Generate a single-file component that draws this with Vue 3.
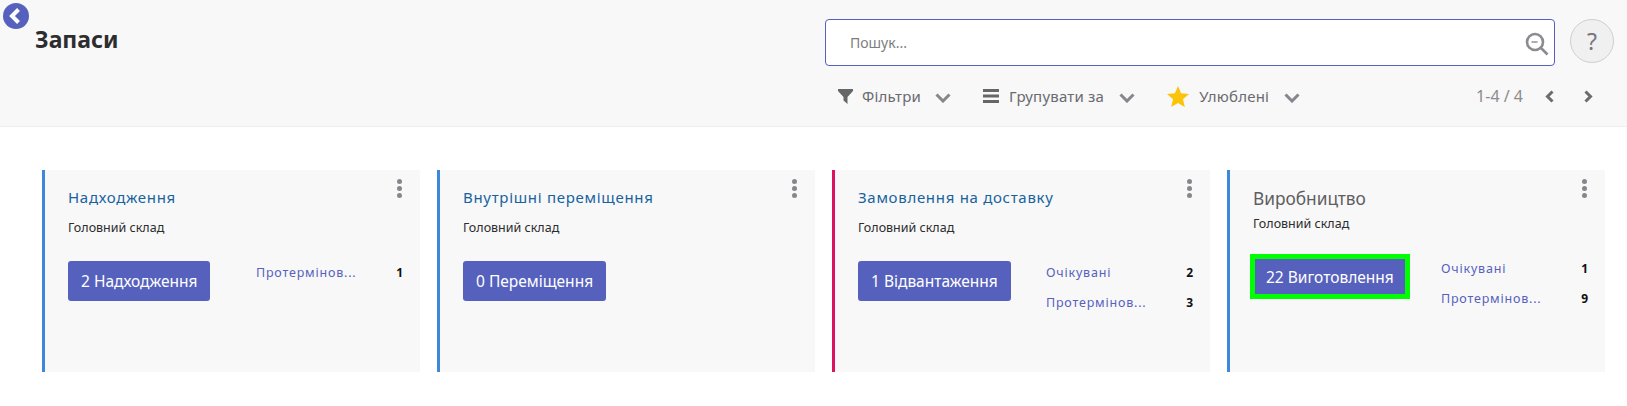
<script setup>
const cards = [
  { title: 'Надходження', color: '#3d88dc', button: '2 Надходження', rows: [['Протермінов...', 1]] },
  { title: 'Внутрішні переміщення', color: '#3d88dc', button: '0 Переміщення', rows: [] },
  { title: 'Замовлення на доставку', color: '#dc1460', button: '1 Відвантаження', rows: [['Очікувані', 2], ['Протермінов...', 3]] },
  { title: 'Виробництво', color: '#3d88dc', button: '22 Виготовлення', active: true, rows: [['Очікувані', 1], ['Протермінов...', 9]] },
]
</script>

<template>
  <div class="page">
    <header class="head">
      <svg class="back" viewBox="0 0 26 26" width="26" height="26">
        <circle cx="13" cy="13" r="13" fill="#5661bd" />
        <path d="M15.5 6.500 9 13l6.500 6.500" fill="none" stroke="#fff" stroke-width="4" />
      </svg>
      <h1 class="title">Запаси</h1>
      <div class="controls">
        <div class="search-line">
          <div class="search">
            <span class="placeholder">Пошук...</span>
            <svg class="loupe" viewBox="0 0 24 24" width="24" height="24">
              <circle cx="10" cy="10" r="8" fill="none" stroke="#8b8b91" stroke-width="2.6" />
              <path d="M6.500 10h6" stroke="#8b8b91" stroke-width="1.4" />
              <path d="m16 16 6.500 6.500" stroke="#8b8b91" stroke-width="2.6" />
            </svg>
          </div>
          <div class="help">?</div>
        </div>
        <div class="tools">
          <div class="tool first">
            <svg viewBox="0 0 15 15" width="15" height="15"><path d="M0 0h15v2L9.500 8v7l-4-3.500V8L0 2z" fill="#666" /></svg>
            <span>Фільтри</span>
            <svg class="chev" viewBox="0 0 16 10" width="16" height="10"><path d="m1.500 1.500 6.500 6.500 6.500-6.500" fill="none" stroke="#86868c" stroke-width="3" /></svg>
          </div>
          <div class="tool second">
            <svg viewBox="0 0 16 14" width="16" height="14"><path d="M0 0h16v3H0zM0 5.500h16v3H0zM0 11h16v3H0z" fill="#666" /></svg>
            <span>Групувати за</span>
            <svg class="chev" viewBox="0 0 16 10" width="16" height="10"><path d="m1.500 1.500 6.500 6.500 6.500-6.500" fill="none" stroke="#86868c" stroke-width="3" /></svg>
          </div>
          <div class="tool third">
            <svg viewBox="0 0 22 21" width="22" height="21"><path d="m11 0 3.100 7.300 7.900.7-6 5.200 1.800 7.800L11 16.900 4.200 21 6 13.200 0 8l7.900-.7z" fill="#fcc30b" /></svg>
            <span>Улюблені</span>
            <svg class="chev" viewBox="0 0 16 10" width="16" height="10"><path d="m1.500 1.500 6.500 6.500 6.500-6.500" fill="none" stroke="#86868c" stroke-width="3" /></svg>
          </div>
          <div class="pager">
            <span class="count">1-4 / 4</span>
            <svg viewBox="0 0 10 13" width="10" height="13"><path d="M8.500 1.500 3.500 6.500l5 5" fill="none" stroke="#6b6b70" stroke-width="3" /></svg>
            <svg viewBox="0 0 10 13" width="10" height="13"><path d="m1.500 1.500 5 5-5 5" fill="none" stroke="#6b6b70" stroke-width="3" /></svg>
          </div>
        </div>
      </div>
    </header>
    <main class="cards">
      <section v-for="card in cards" :key="card.title" class="card" :class="{ active: card.active }" :style="{ borderLeftColor: card.color }">
        <div class="kebab"><i></i><i></i><i></i></div>
        <div class="card-title">{{ card.title }}</div>
        <div class="card-sub">Головний склад</div>
        <div class="card-body">
          <div class="btn-col">
            <button class="btn">{{ card.button }}</button>
          </div>
          <div class="rows">
            <div v-for="row in card.rows" :key="row[0]" class="row">
              <span class="link">{{ row[0] }}</span>
              <b class="num">{{ row[1] }}</b>
            </div>
          </div>
        </div>
      </section>
    </main>
  </div>
</template>

<style>
html, body { margin: 0; background: #fff; }
</style>

<style scoped>
.page {
  width: 1627px;
  height: 406px;
  font-family: "Noto Sans", sans-serif;
  background: #fff;
  overflow: hidden;
}
.head {
  position: relative;
  box-sizing: border-box;
  height: 127px;
  background: #f8f8f8;
  border-bottom: 1px solid #eee;
  display: flex;
  justify-content: space-between;
}
.back { position: absolute; left: 3px; top: 3px; }
.title {
  margin: 24px 0 0 35px;
  font-size: 23px;
  line-height: 30px;
  font-weight: 700;
  color: #2d2d2f;
}
.controls { width: 789px; padding: 19px 13px 0 0; margin-left: auto; }
.search-line { display: flex; align-items: flex-start; gap: 15px; }
.search {
  box-sizing: border-box;
  width: 730px;
  height: 47px;
  background: #fff;
  border: 1px solid #5661bd;
  border-radius: 4px;
  display: flex;
  align-items: center;
  justify-content: space-between;
  padding: 0 5px 0 24px;
}
.placeholder { font-size: 14px; color: #7d7d7d; }
.loupe { margin-top: 2px; }
.help {
  box-sizing: border-box;
  width: 44px;
  height: 44px;
  border-radius: 50%;
  border: 1px solid #cfcfcf;
  background: #f0f0f0;
  color: #77777c;
  font-size: 23px;
  display: flex;
  align-items: center;
  justify-content: center;
}
.tools {
  display: flex;
  align-items: center;
  height: 32px;
  margin-top: 14px;
  font-size: 15px;
  letter-spacing: 0.2px;
  color: #6a6a70;
}
.tool { display: flex; align-items: center; }
.tool.first { margin-left: 13px; gap: 9px; }
.tool.second { margin-left: 32px; gap: 10px; }
.tool.third { margin-left: 32px; gap: 10px; }
.chev { margin-left: 5px; margin-top: 3px; }
.pager {
  margin-left: auto;
  margin-right: 20px;
  display: flex;
  align-items: center;
  gap: 30px;
  color: #8b8b90;
}
.count { margin-right: -9px; font-size: 16px; letter-spacing: 0; }
.cards {
  display: flex;
  gap: 17px;
  padding: 43px 0 0 42px;
}
.card {
  position: relative;
  box-sizing: border-box;
  width: 378px;
  height: 202px;
  background: #f8f8f8;
  border-left: 3px solid #3d88dc;
  padding: 17px 17px 0 23px;
}
.kebab {
  position: absolute;
  right: 18px;
  top: 9px;
  display: flex;
  flex-direction: column;
  gap: 2px;
}
.kebab i {
  width: 5px;
  height: 5px;
  border-radius: 50%;
  background: #86868c;
}
.card-title {
  font-size: 15px;
  line-height: 20px;
  letter-spacing: 0.7px;
  color: #17639f;
}
.card-sub {
  margin-top: 12px;
  font-size: 12.5px;
  line-height: 18px;
  color: #2d2d2f;
}
.card-body {
  display: flex;
  margin-top: 24px;
}
.btn-col { width: 188px; flex: none; }
.btn {
  box-sizing: border-box;
  height: 40px;
  padding: 0 13px;
  border: 0;
  border-radius: 3px;
  background: #5661bd;
  color: #fff;
  font: 15.5px "Noto Sans", sans-serif;
}
.rows { flex: 1; margin-top: -4px; }
.row {
  display: flex;
  justify-content: space-between;
  align-items: center;
  height: 30px;
  font-size: 12.5px;
  letter-spacing: 0.8px;
}
.link { color: #5661bd; }
.num { color: #111; letter-spacing: 0; font-size: 12px; }
.card.active { padding-top: 16px; }
.card.active .card-title {
  font-size: 17.3px;
  line-height: 26px;
  letter-spacing: 0;
  color: #5e5e62;
}
.card.active .card-sub { margin-top: 3px; }
.card.active .card-body { margin-top: 21px; margin-left: -3px; }
.card.active .btn-col { width: 191px; }
.card.active .btn {
  height: 45px;
  border: 5px solid #00ff00;
  border-radius: 0;
  padding: 0 11px;
}
.card.active .rows { margin-top: -1px; }
</style>
